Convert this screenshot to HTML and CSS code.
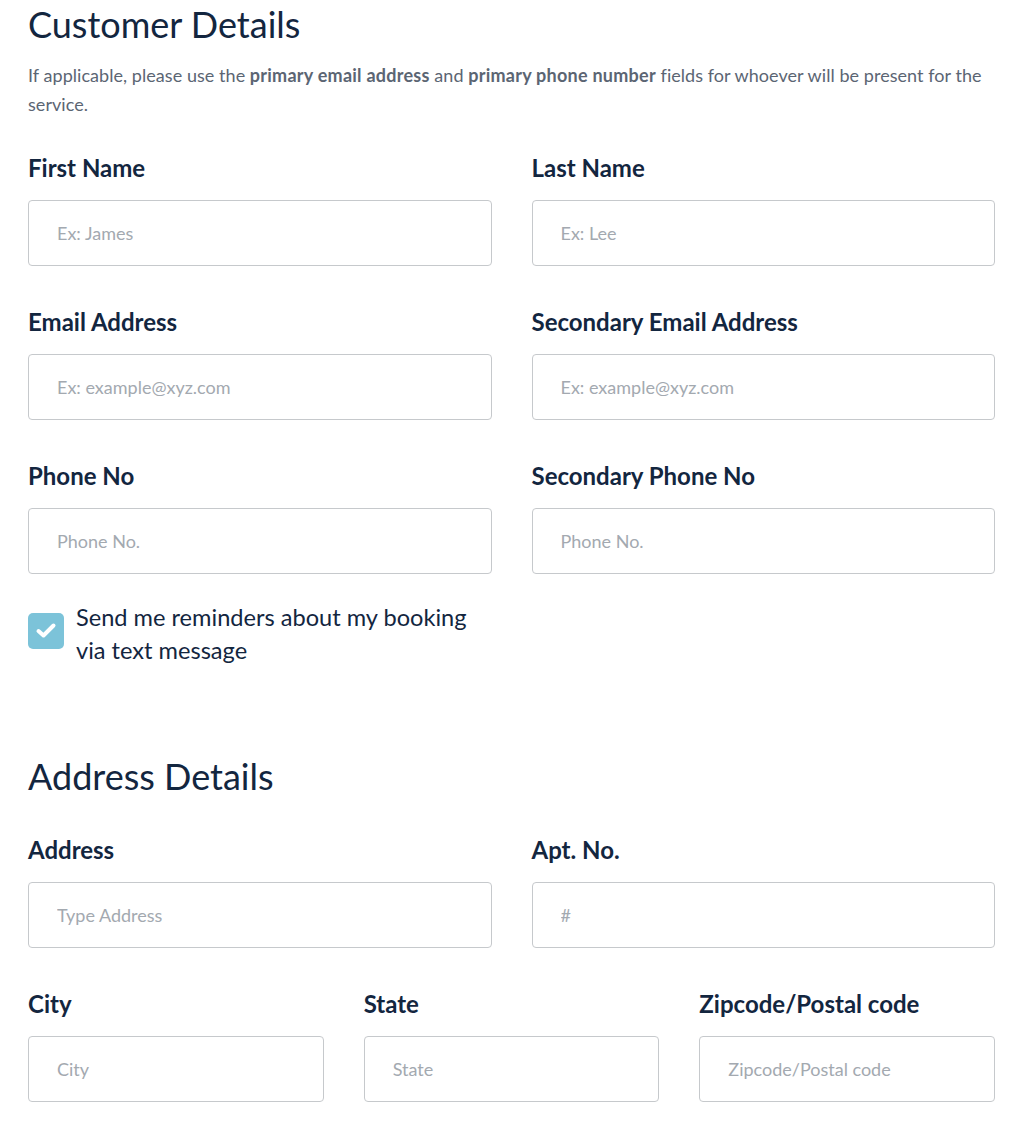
FILE: index.html
```html
<!DOCTYPE html>
<html lang="en">
<head>
<meta charset="utf-8">
<title>Customer Details</title>
<link rel="stylesheet" href="styles.css">
</head>
<body>
<main class="form">
  <section class="section">
    <h1 class="section-title">Customer Details</h1>
    <p class="section-note">If applicable, please use the <strong>primary email address</strong> and <strong>primary phone number</strong> fields for whoever will be present for the service.</p>
    <div class="grid grid-2">
      <label class="field">
        <span class="field-label">First Name</span>
        <input class="field-input" type="text" placeholder="Ex: James">
      </label>
      <label class="field">
        <span class="field-label">Last Name</span>
        <input class="field-input" type="text" placeholder="Ex: Lee">
      </label>
      <label class="field">
        <span class="field-label">Email Address</span>
        <input class="field-input" type="email" placeholder="Ex: example@xyz.com">
      </label>
      <label class="field">
        <span class="field-label">Secondary Email Address</span>
        <input class="field-input" type="email" placeholder="Ex: example@xyz.com">
      </label>
      <label class="field">
        <span class="field-label">Phone No</span>
        <input class="field-input" type="tel" placeholder="Phone No.">
      </label>
      <label class="field">
        <span class="field-label">Secondary Phone No</span>
        <input class="field-input" type="tel" placeholder="Phone No.">
      </label>
    </div>
    <div class="grid grid-2 check-row">
      <label class="check">
        <span class="check-box">
          <svg width="24" height="24" viewBox="0 0 24 24" aria-hidden="true"><path d="M4.5 12l5 4.5 10-10" fill="none" stroke="#fff" stroke-width="4" stroke-linecap="round" stroke-linejoin="round"/></svg>
        </span>
        <span class="check-text">Send me reminders about my booking via text message</span>
      </label>
    </div>
  </section>
  <section class="section section-address">
    <h2 class="section-title">Address Details</h2>
    <div class="grid grid-2">
      <label class="field">
        <span class="field-label">Address</span>
        <input class="field-input" type="text" placeholder="Type Address">
      </label>
      <label class="field">
        <span class="field-label">Apt. No.</span>
        <input class="field-input" type="text" placeholder="#">
      </label>
    </div>
    <div class="grid grid-3">
      <label class="field">
        <span class="field-label">City</span>
        <input class="field-input" type="text" placeholder="City">
      </label>
      <label class="field">
        <span class="field-label">State</span>
        <input class="field-input" type="text" placeholder="State">
      </label>
      <label class="field">
        <span class="field-label">Zipcode/Postal code</span>
        <input class="field-input" type="text" placeholder="Zipcode/Postal code">
      </label>
    </div>
  </section>
</main>
</body>
</html>
```
FILE: styles.css
```css
* { box-sizing: border-box; }
html, body { margin: 0; padding: 0; background: #fff; }
body {
  font-family: Lato, "Open Sans", "Liberation Sans", sans-serif;
  color: #13263f;
}
.form {
  width: 995px;
  padding: 3px 0 0 28px;
}
.section-title {
  margin: 0;
  font-size: 36px;
  font-weight: 400;
  line-height: 43px;
  color: #13263f;
}
.section-note {
  margin: 15px 0 34px;
  font-size: 18px;
  line-height: 29px;
  color: #5b6573;
  letter-spacing: 0.05px;
}
.section-note strong { font-weight: 700; letter-spacing: 0.25px; }
.grid {
  display: grid;
  column-gap: 40px;
  row-gap: 41px;
}
.grid-2 { grid-template-columns: 1fr 1fr; }
.grid-3 { grid-template-columns: 1fr 1fr 1fr; margin-top: 41px; }
.field {
  display: flex;
  flex-direction: column;
  gap: 17px;
}
.field-label {
  font-size: 24px;
  font-weight: 700;
  line-height: 30px;
  color: #13263f;
}
.field-input {
  height: 66px;
  width: 100%;
  border: 1px solid #c6c9cc;
  border-radius: 4px;
  padding: 0 28px;
  font-family: inherit;
  font-size: 18px;
  color: #13263f;
  background: #fff;
  outline: none;
}
.field-input::placeholder { color: #a3a9b0; }
.check-row { margin-top: 27px; }
.check {
  display: flex;
  align-items: flex-start;
  gap: 12px;
}
.check-box {
  flex: none;
  width: 36px;
  height: 36px;
  margin-top: 12px;
  border-radius: 5px;
  background: #7cc3d9;
  display: flex;
  align-items: center;
  justify-content: center;
}
.check-text {
  font-size: 23.6px;
  line-height: 33px;
  color: #13263f;
}
.section-address { margin-top: 88px; }
.section-address .section-title { margin-bottom: 37px; }
```
